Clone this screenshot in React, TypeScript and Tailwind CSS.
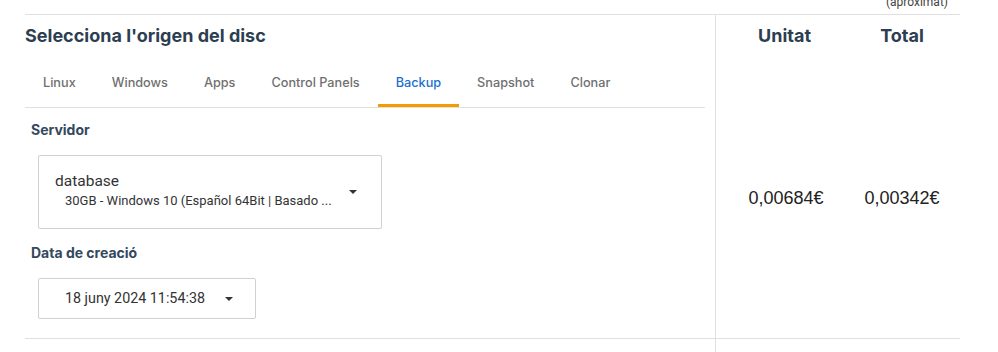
import { useState } from 'react';

const tabs = ['Linux', 'Windows', 'Apps', 'Control Panels', 'Backup', 'Snapshot', 'Clonar'];

function Caret() {
  return (
    <svg width="8" height="4" viewBox="0 0 8 4" className="shrink-0">
      <path d="M0 0h8L4 4z" fill="#333" />
    </svg>
  );
}

export default function App() {
  const [active, setActive] = useState('Backup');

  return (
    <div className="h-[352px] w-[998px] overflow-hidden bg-white font-['Inter',sans-serif] text-[#34495e]">
      <div className="ml-[25px] w-[935px]">
        {/* header remnant */}
        <div className="flex h-[14px] justify-end overflow-hidden pr-[12px]">
          <span className="-mt-[6px] font-['Roboto',sans-serif] text-[12px] leading-[16px] text-[#444]">(aproximat)</span>
        </div>

        <div className="grid grid-cols-[690px_245px] border-y border-[#e0e0e0]">
          {/* left column */}
          <div className="pr-[10px] pb-[19px]">
            <h2 className="pt-[9px] text-[18px] leading-[24px] font-bold text-[#2c3e50]">Selecciona l'origen del disc</h2>

            <div className="mt-[11px] flex border-b border-[#e0e0e0]">
              {tabs.map((t) => (
                <button
                  key={t}
                  onClick={() => setActive(t)}
                  className={
                    t === active
                      ? 'flex h-[48px] items-center border-b-[3px] border-[#f59a00] px-[18px] pt-[3px] text-[12.7px] font-medium text-[#1a6fd0]'
                      : 'flex h-[48px] items-center border-b-[3px] border-transparent px-[18px] pt-[3px] text-[12.7px] font-medium text-[#6f6f6f]'
                  }
                >
                  {t}
                </button>
              ))}
            </div>

            <div className="pl-[6px]">
              <div className="mt-[12px] text-[14px] leading-[20px] font-bold">Servidor</div>
              <div className="mt-[15px] ml-[7px] flex h-[74px] w-[344px] items-center justify-between rounded-[2px] border border-[#d0d0d0] pr-[24px] pl-[16px] font-['Roboto',sans-serif] text-[#333]">
                <div className="flex flex-col">
                  <span className="text-[15.5px] leading-[18px]">database</span>
                  <span className="pl-[10px] text-[13px] leading-[22px]">30GB - Windows 10 (Español 64Bit | Basado ...</span>
                </div>
                <Caret />
              </div>

              <div className="mt-[14px] text-[14px] leading-[20px] font-bold">Data de creació</div>
              <div className="mt-[15px] ml-[7px] flex h-[41px] w-[218px] items-center gap-[20px] rounded-[2px] border border-[#d0d0d0] pl-[26px] font-['Roboto',sans-serif] text-[14.3px] text-[#333]">
                <span>18 juny 2024 11:54:38</span>
                <Caret />
              </div>
            </div>
          </div>

          {/* right column */}
          <div className="flex flex-col border-l border-[#e0e0e0] pl-[12px]">
            <div className="grid grid-cols-[116px_116px] pt-[9px] text-center text-[18px] leading-[24px] font-bold text-[#2c3e50]">
              <span className="-ml-[3px]">Unitat</span>
              <span>Total</span>
            </div>
            <div className="mt-[139px] grid grid-cols-[116px_116px] text-center font-['Liberation_Sans',sans-serif] text-[18px] leading-[22px] text-[#222]">
              <span>0,00684€</span>
              <span>0,00342€</span>
            </div>
          </div>
        </div>

        <div className="grid h-[20px] grid-cols-[690px_245px]">
          <div />
          <div className="border-l border-[#e0e0e0]" />
        </div>
      </div>
    </div>
  );
}
